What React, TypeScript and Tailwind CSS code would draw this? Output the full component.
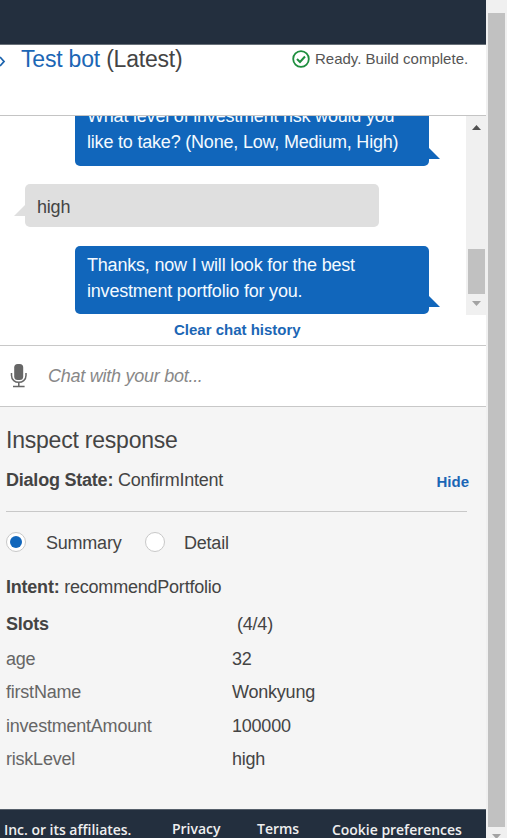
import React from "react";

const slots = [
  { name: "age", value: "32", height: "h-[33px]" },
  { name: "firstName", value: "Wonkyung", height: "h-[34px]" },
  { name: "investmentAmount", value: "100000", height: "h-[33px]" },
  { name: "riskLevel", value: "high", height: "h-[33px]" },
];

function BotBubble({ children, className }: { children: React.ReactNode; className: string }) {
  return (
    <div className={`relative ml-[75px] w-[354px] shrink-0 rounded-[5px] bg-[#1166bb] pl-3 text-[18px] leading-[26px] tracking-[-0.2px] whitespace-nowrap text-[#f4faff] ${className}`}>
      {children}
      <svg className="absolute bottom-[7px] left-[354px]" width="11" height="11">
        <path d="M0 0L11 11H0Z" fill="#1166bb" />
      </svg>
    </div>
  );
}

function Header() {
  return (
    <header className="flex h-[71px] shrink-0 items-start border-b border-[#c4c4c4] bg-white">
      <svg className="mt-[11px] shrink-0" width="6" height="11" viewBox="0 0 6 11">
        <path d="M0 1L4 5.5L0 10" fill="none" stroke="#1b63ae" strokeWidth="1.8" />
      </svg>
      <h1 className="ml-[15px] w-[271px] text-[23px] leading-7 tracking-[-0.2px] whitespace-nowrap text-[#444]">
        <span className="text-[#1b66b5]">Test bot</span> (Latest)
      </h1>
      <svg className="mt-[5px] shrink-0" width="18" height="18" viewBox="0 0 18 18" fill="none" stroke="#1e8e3e">
        <circle cx="9" cy="9" r="7.8" strokeWidth="1.8" />
        <path d="M5 9L8 12L13 6.5" strokeWidth="2" />
      </svg>
      <span className="ml-[5px] text-[15px] leading-[27px] whitespace-nowrap text-[#555]">Ready. Build complete.</span>
    </header>
  );
}

function Chat() {
  return (
    <section className="flex h-[199px] shrink-0">
      <div className="flex h-full w-[466px] flex-col overflow-hidden">
        <BotBubble className="-mt-[25px] h-[75px] pt-3">
          What level of investment risk would you
          <br />
          like to take? (None, Low, Medium, High)
        </BotBubble>
        <div className="relative mt-[18px] ml-[25px] h-[43px] w-[354px] shrink-0 rounded-[5px] bg-[#dfdfdf] pt-2.5 pl-3 text-[18px] leading-[26px] tracking-[-0.2px] text-[#444]">
          high
          <svg className="absolute top-[21px] -left-[11px]" width="11" height="11">
            <path d="M11 0V11H0Z" fill="#dfdfdf" />
          </svg>
        </div>
        <BotBubble className="mt-[19px] h-[68px] pt-1.5">
          Thanks, now I will look for the best
          <br />
          investment portfolio for you.
        </BotBubble>
      </div>
      <div className="flex w-5 flex-col items-center bg-[#f0f0f0] pl-px">
        <svg className="mt-[9px] shrink-0" width="9" height="5"><path d="M0 5L4.5 0L9 5Z" fill="#505050" /></svg>
        <div className="mt-[119px] h-[45px] w-[17px] shrink-0 bg-[#c1c1c1]" />
        <svg className="mt-[7px] shrink-0" width="9" height="5"><path d="M0 0L4.5 5L9 0Z" fill="#a3a3a3" /></svg>
      </div>
    </section>
  );
}

function Microphone() {
  return (
    <svg className="mt-[18px] ml-2.5 shrink-0" width="18" height="24" viewBox="0 0 18 24">
      <rect x="4.2" y="0" width="9" height="16" rx="3.5" fill="#666" />
      <path d="M1.5 9V11.5C1.5 20.5 16 20.5 16 11.5V9M8.8 18V22M3 22.4H14.6" fill="none" stroke="#666" strokeWidth="1.5" />
    </svg>
  );
}

function Radio({ checked }: { checked?: boolean }) {
  return (
    <span className="-mt-0.5 flex size-5 shrink-0 items-center justify-center rounded-full border border-[#c8c8c8] bg-white">
      {checked && <span className="size-3 rounded-full bg-[#1166bb]" />}
    </span>
  );
}

function Inspect() {
  return (
    <section className="flex h-[402px] shrink-0 flex-col bg-[#f5f5f5] pl-1.5 text-[18px] tracking-[-0.22px] whitespace-nowrap text-[#444]">
      <h2 className="mt-[19px] h-7 text-[23px] leading-7 tracking-[-0.22px]">Inspect response</h2>
      <div className="mt-3 flex h-7 w-[463px] items-center justify-between leading-7">
        <div><b>Dialog State:</b> ConfirmIntent</div>
        <b className="pt-[3px] text-[15px] tracking-normal text-[#1b66b5]">Hide</b>
      </div>
      <div className="mt-[17px] h-px w-[461px] shrink-0 bg-[#c8c8c8]" />
      <div className="mt-[17px] flex h-7 items-center leading-7">
        <Radio checked />
        <span className="ml-5 w-[99px]">Summary</span>
        <Radio />
        <span className="ml-[19px]">Detail</span>
      </div>
      <div className="mt-[16px] h-7 leading-7"><b>Intent:</b> recommendPortfolio</div>
      <div className="mt-[9px] flex h-7 leading-7"><b className="w-[231px]">Slots</b>(4/4)</div>
      <div className="mt-[7px] flex flex-col leading-7">
        {slots.map((slot) => (
          <div key={slot.name} className={`flex ${slot.height}`}>
            <span className="w-[226px] text-[#666]">{slot.name}</span>
            <span>{slot.value}</span>
          </div>
        ))}
      </div>
    </section>
  );
}

export default function App() {
  return (
    <div className="flex h-[838px] w-[507px] overflow-hidden bg-white font-['Liberation_Sans',Arial,sans-serif]">
      <main className="flex w-[486px] shrink-0 flex-col overflow-hidden">
        <div className="h-[45px] shrink-0 border-b border-[#687078] bg-[#232f3e]" />
        <Header />
        <Chat />
        <div className="h-[31px] shrink-0 border-b border-[#c8c8c8] pl-[174px] text-[15px] leading-[30px] font-bold text-[#1b66b5]">Clear chat history</div>
        <div className="flex h-[61px] shrink-0 border-b border-[#c8c8c8]">
          <Microphone />
          <span className="ml-5 text-[18px] leading-[60px] tracking-[-0.26px] text-[#888] italic">Chat with your bot...</span>
        </div>
        <Inspect />
        <footer className="flex h-[29px] shrink-0 overflow-hidden border-t border-[#56606b] bg-[#232f3e] pl-1 font-['Open_Sans',sans-serif] text-[14px] leading-[38px] font-semibold tracking-[-0.03px] whitespace-nowrap text-[#eee]">
          <span className="w-[168px] pt-px">Inc. or its affiliates.</span>
          <span className="w-[85px]">Privacy</span>
          <span className="w-[75px]">Terms</span>
          <span className="pt-px">Cookie preferences</span>
        </footer>
      </main>
      <aside className="flex w-[21px] shrink-0 flex-col items-center bg-[#f0f0f0]">
        <div className="mt-[13px] h-[814px] w-[17px] shrink-0 bg-[#c1c1c1]" />
        <svg className="mt-[7px] shrink-0" width="9" height="5"><path d="M0 0L4.5 5L9 0Z" fill="#a3a3a3" /></svg>
      </aside>
    </div>
  );
}
